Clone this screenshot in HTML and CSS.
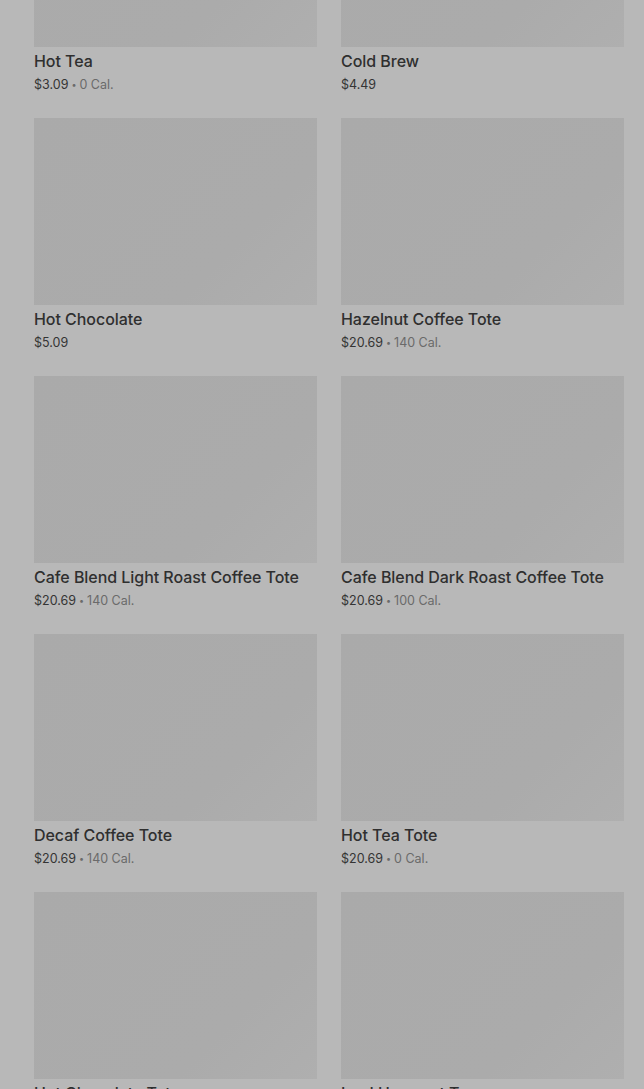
FILE: index.html
```html
<!DOCTYPE html>
<html lang="en">
<head>
    <meta charset="UTF-8">
    <meta name="viewport" content="width=device-width, initial-scale=1.0">
    <title>Menu</title>
    <link rel="stylesheet" href="styles.css">
</head>
<body>

    <div class="menu-grid">
        <div class="item">
            <div class="thumb"></div>
            <div class="name">Hot Tea</div>
            <div class="meta">$3.09<span class="cal"><span class="dot">•</span>0 Cal.</span></div>
        </div>
        <div class="item">
            <div class="thumb"></div>
            <div class="name">Cold Brew</div>
            <div class="meta">$4.49</div>
        </div>
        <div class="item">
            <div class="thumb"></div>
            <div class="name">Hot Chocolate</div>
            <div class="meta">$5.09</div>
        </div>
        <div class="item">
            <div class="thumb"></div>
            <div class="name">Hazelnut Coffee Tote</div>
            <div class="meta">$20.69<span class="cal"><span class="dot">•</span>140 Cal.</span></div>
        </div>
        <div class="item">
            <div class="thumb"></div>
            <div class="name">Cafe Blend Light Roast Coffee Tote</div>
            <div class="meta">$20.69<span class="cal"><span class="dot">•</span>140 Cal.</span></div>
        </div>
        <div class="item">
            <div class="thumb"></div>
            <div class="name">Cafe Blend Dark Roast Coffee Tote</div>
            <div class="meta">$20.69<span class="cal"><span class="dot">•</span>100 Cal.</span></div>
        </div>
        <div class="item">
            <div class="thumb"></div>
            <div class="name">Decaf Coffee Tote</div>
            <div class="meta">$20.69<span class="cal"><span class="dot">•</span>140 Cal.</span></div>
        </div>
        <div class="item">
            <div class="thumb"></div>
            <div class="name">Hot Tea Tote</div>
            <div class="meta">$20.69<span class="cal"><span class="dot">•</span>0 Cal.</span></div>
        </div>
        <div class="item">
            <div class="thumb"></div>
            <div class="name">Hot Chocolate Tote</div>
            <div class="meta">$20.69<span class="cal"><span class="dot">•</span>140 Cal.</span></div>
        </div>
        <div class="item">
            <div class="thumb"></div>
            <div class="name">Iced Unsweet Tea</div>
            <div class="meta">$3.09<span class="cal"><span class="dot">•</span>0 Cal.</span></div>
        </div>
    </div>

</body>
</html>
```

FILE: styles.css
```css
  html, body {
      margin: 0;
      height: 100%;
      overflow: hidden;
  }

  body {
      font-family: 'Inter', 'Roboto', sans-serif;
      background-color: #b8b8b8;
      color: #2e2e2e;
  }

  /* Rejilla de productos, desplazada como si la lista estuviera con scroll */
  .menu-grid {
      display: grid;
      grid-template-columns: 283px 283px;
      column-gap: 24px;
      row-gap: 23px;
      padding: 0 20px 0 34px;
      margin-top: -140px;
  }

  .thumb {
      height: 187px;
      background: linear-gradient(135deg, #aaaaaa 0%, #ababab 70%, #afafaf 100%);
  }

  .name {
      margin-top: 4px;
      font-size: 16px;
      line-height: 20px;
      font-weight: 500;
      letter-spacing: -0.05px;
      color: #2f2f2f;
      white-space: nowrap;
  }

  .meta {
      margin-top: 4px;
      font-size: 12.5px;
      line-height: 20px;
      color: #343434;
  }

  .cal {
      color: #6a6a6a;
  }

  .dot {
      font-size: 9px;
      margin: 0 3px;
      vertical-align: 1px;
  }
```
